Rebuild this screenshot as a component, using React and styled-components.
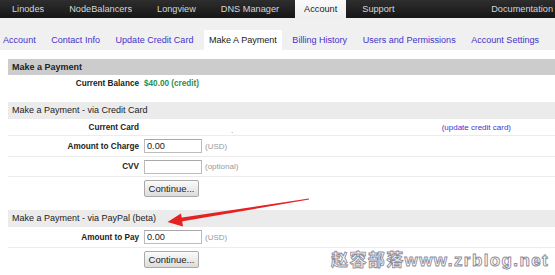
import React from "react";
import styled, { createGlobalStyle } from "styled-components";

const Global = createGlobalStyle`
  html, body { margin: 0; padding: 0; background: #fff; }
  body { width: 555px; height: 275px; overflow: hidden; font-family: "Liberation Sans", Arial, sans-serif; }
`;

const Page = styled.div`
  position: relative;
  width: 555px;
  height: 275px;
  overflow: hidden;
  background: #fff;
`;

const TopBar = styled.div`
  display: flex;
  height: 18px;
  padding-left: 3px;
  gap: 7px;
  background: linear-gradient(#2e2e2e, #161616);
`;

const TopTab = styled.div`
  display: flex;
  align-items: center;
  padding: 0 9px 1px;
  font-size: 9.2px;
  color: ${(p) => (p.$active ? "#1a1a1a" : "#d6d6d6")};
  background: ${(p) => (p.$active ? "linear-gradient(#fafafa, #eeeeee)" : "transparent")};
  margin-left: ${(p) => (p.$right ? "auto" : "0")};
  padding-right: ${(p) => (p.$right ? "2px" : "9px")};
  white-space: nowrap;
`;

const SubNav = styled.div`
  display: flex;
  align-items: flex-end;
  height: 32px;
  background: #f0f0f0;
  gap: 5.5px;
`;

const SubTab = styled.div`
  height: 20px;
  line-height: 20px;
  padding: 0 5px;
  font-size: 9.05px;
  color: ${(p) => (p.$active ? "#1a1a1a" : "#4433cc")};
  background: ${(p) => (p.$active ? "#ffffff" : "transparent")};
  white-space: nowrap;
  &:first-child { padding-left: 3px; }
`;

const Content = styled.div`
  padding: 9px 0 0 8px;
`;

const Section = styled.div`
  margin-bottom: ${(p) => p.$mb || 0}px;
`;

const Header = styled.div`
  height: ${(p) => (p.$strong ? 16 : 17)}px;
  line-height: ${(p) => (p.$strong ? 16 : 17)}px;
  padding-left: 4px;
  font-size: 9px;
  font-weight: ${(p) => (p.$strong ? "bold" : "normal")};
  color: #222;
  background: ${(p) => (p.$strong ? "#cccccc" : "#ebebeb")};
`;

const Row = styled.div`
  display: grid;
  grid-template-columns: 131px 1fr;
  column-gap: 5px;
  align-items: center;
  min-height: ${(p) => p.$h || 20}px;
  border-bottom: ${(p) => (p.$line ? "1px solid #ececec" : "none")};
`;

const Label = styled.div`
  text-align: right;
  font-size: 8.2px;
  font-weight: bold;
  color: #222;
`;

const Value = styled.div`
  display: flex;
  align-items: center;
  font-size: 8.2px;
  color: #222;
`;

const Green = styled.span`
  font-weight: bold;
  color: #2a8f4f;
`;

const Dot = styled.span`
  margin-left: 87px;
  margin-top: 6px;
  font-size: 8px;
  color: #777;
`;

const SmallLink = styled.span`
  margin-left: auto;
  margin-right: 44px;
  font-size: 8px;
  color: #4433cc;
`;

const Input = styled.input`
  box-sizing: border-box;
  width: 58px;
  height: 14px;
  margin: 0;
  padding: 0 2px;
  border: 1px solid #bcbcbc;
  border-top-color: #a8a8a8;
  font-family: "Liberation Sans", Arial, sans-serif;
  font-size: 9.2px;
  color: #222;
  outline: none;
`;

const Hint = styled.span`
  margin-left: 3px;
  font-size: 8px;
  color: #9a9a9a;
`;

const ButtonCell = styled.div`
  grid-column: 2;
  display: flex;
  padding: 3px 0;
`;

const Button = styled.button`
  box-sizing: border-box;
  width: 55px;
  height: 17px;
  padding: 0;
  border: 1px solid #a9a9a9;
  border-radius: 2px;
  background: linear-gradient(#fbfbfb, #dcdcdc);
  font-family: "Liberation Sans", Arial, sans-serif;
  font-size: 9.5px;
  color: #222;
`;

const ArrowSvg = styled.svg`
  position: absolute;
  left: 0;
  top: 0;
  pointer-events: none;
`;

const Watermark = styled.div`
  position: absolute;
  left: 331px;
  top: 251px;
  font-family: "Liberation Sans", "Noto Sans CJK SC", sans-serif;
  font-size: 17px;
  font-weight: bold;
  letter-spacing: 1.4px;
  color: #ffffff;
  -webkit-text-stroke: 0.9px #8c8c9c;
  white-space: nowrap;
  line-height: 20px;
`;

const topTabs = ["Linodes", "NodeBalancers", "Longview", "DNS Manager", "Account", "Support"];
const subTabs = ["Account", "Contact Info", "Update Credit Card", "Make A Payment", "Billing History", "Users and Permissions", "Account Settings"];

export default function App() {
  return (
    <Page>
      <Global />
      <TopBar>
        {topTabs.map((t) => (
          <TopTab key={t} $active={t === "Account"}>{t}</TopTab>
        ))}
        <TopTab $right>Documentation</TopTab>
      </TopBar>
      <SubNav>
        {subTabs.map((t) => (
          <SubTab key={t} $active={t === "Make A Payment"}>{t}</SubTab>
        ))}
      </SubNav>
      <Content>
        <Section $mb={10}>
          <Header $strong>Make a Payment</Header>
          <Row $h={17}>
            <Label>Current Balance</Label>
            <Value><Green>$40.00 (credit)</Green></Value>
          </Row>
        </Section>
        <Section $mb={10}>
          <Header>Make a Payment - via Credit Card</Header>
          <Row $h={16} $line>
            <Label>Current Card</Label>
            <Value><Dot>.</Dot><SmallLink>(update credit card)</SmallLink></Value>
          </Row>
          <Row $line>
            <Label>Amount to Charge</Label>
            <Value><Input defaultValue="0.00" /><Hint>(USD)</Hint></Value>
          </Row>
          <Row $line $h={19}>
            <Label>CVV</Label>
            <Value><Input defaultValue="" /><Hint>(optional)</Hint></Value>
          </Row>
          <Row>
            <ButtonCell><Button>Continue...</Button></ButtonCell>
          </Row>
        </Section>
        <Section>
          <Header>Make a Payment - via PayPal (beta)</Header>
          <Row $line>
            <Label>Amount to Pay</Label>
            <Value><Input defaultValue="0.00" /><Hint>(USD)</Hint></Value>
          </Row>
          <Row>
            <ButtonCell><Button>Continue...</Button></ButtonCell>
          </Row>
        </Section>
      </Content>
      <ArrowSvg width="555" height="275" viewBox="0 0 555 275">
        <polygon points="309,198.5 309,199.6 181.3,221.6 180.6,217.8" fill="#e52222" />
        <polygon points="167.5,222 181,213.5 183,226.5" fill="#e52222" />
      </ArrowSvg>
      <Watermark>赵容部落www.zrblog.net</Watermark>
    </Page>
  );
}
